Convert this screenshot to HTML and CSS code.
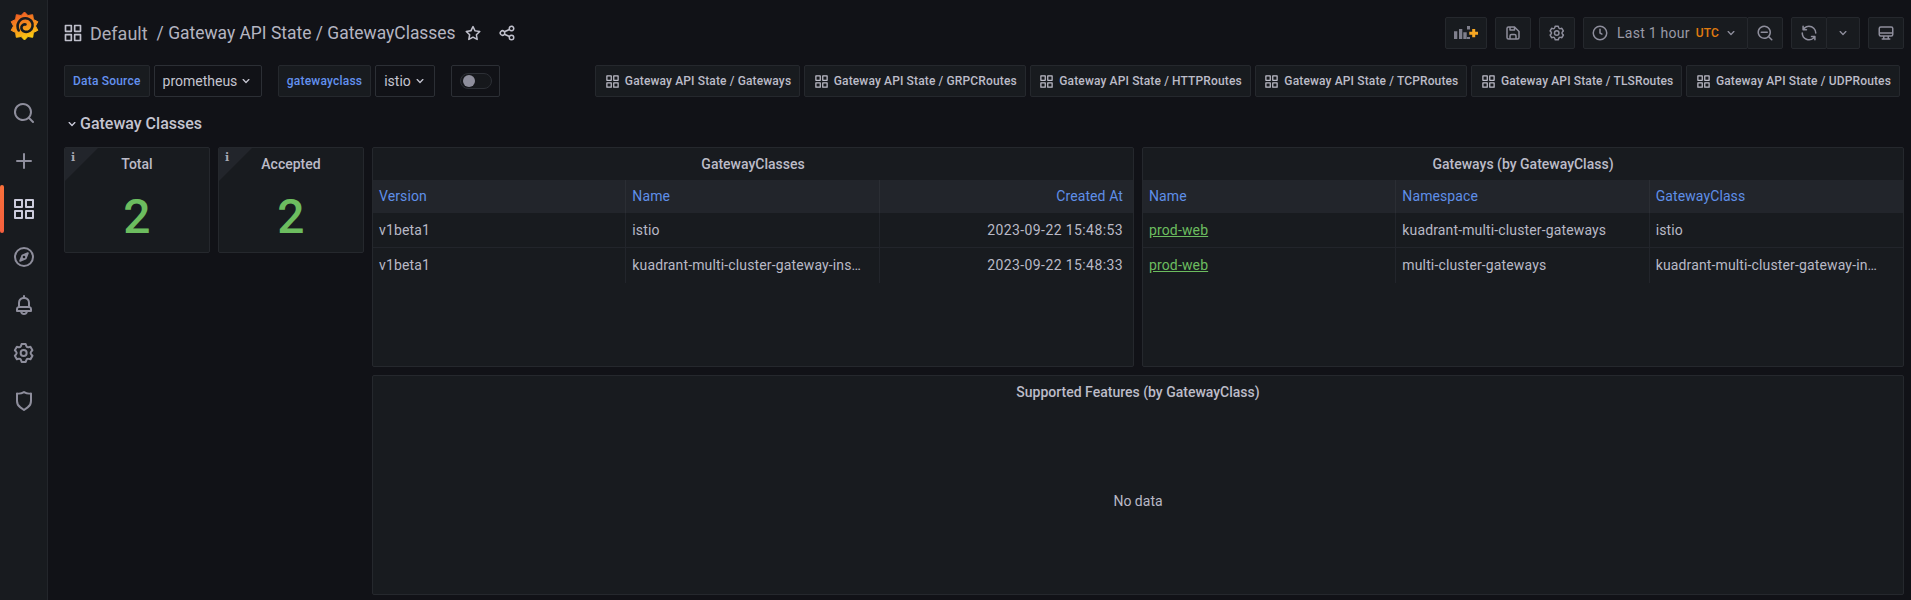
FILE: index.html
```html
<!DOCTYPE html>
<html lang="en">
<head>
<meta charset="utf-8">
<title>Gateway API State / GatewayClasses</title>
<link rel="stylesheet" href="styles.css">
</head>
<body>
<svg class="defs" width="0" height="0" aria-hidden="true">
  <defs>
    <linearGradient id="logoGrad" x1="0.3" y1="0" x2="0.6" y2="1">
      <stop offset="0" stop-color="#ee5a24"/>
      <stop offset="0.55" stop-color="#f7941d"/>
      <stop offset="1" stop-color="#fcd40f"/>
    </linearGradient>
    <symbol id="i-apps" viewBox="0 0 24 24"><path d="M10,13H3a1,1,0,0,0-1,1v7a1,1,0,0,0,1,1h7a1,1,0,0,0,1-1V14A1,1,0,0,0,10,13ZM9,20H4V15H9ZM21,2H14a1,1,0,0,0-1,1v7a1,1,0,0,0,1,1h7a1,1,0,0,0,1-1V3A1,1,0,0,0,21,2ZM20,9H15V4h5Zm1,4H14a1,1,0,0,0-1,1v7a1,1,0,0,0,1,1h7a1,1,0,0,0,1-1V14A1,1,0,0,0,21,13Zm-1,7H15V15h5ZM10,2H3A1,1,0,0,0,2,3v7a1,1,0,0,0,1,1h7a1,1,0,0,0,1-1V3A1,1,0,0,0,10,2ZM9,9H4V4H9Z"/></symbol>
    <symbol id="i-gear" viewBox="0 0 24 24"><path d="M19.9,12.66a1,1,0,0,1,0-1.32L21.18,9.9a1,1,0,0,0,.12-1.17l-2-3.46a1,1,0,0,0-1.07-.48l-1.88.38a1,1,0,0,1-1.15-.66l-.61-1.83A1,1,0,0,0,13.64,2h-4a1,1,0,0,0-1,.68L8.08,4.51a1,1,0,0,1-1.15.66L5,4.79A1,1,0,0,0,4,5.27L2,8.73A1,1,0,0,0,2.1,9.9l1.27,1.44a1,1,0,0,1,0,1.32L2.1,14.1A1,1,0,0,0,2,15.27l2,3.46a1,1,0,0,0,1.07.48l1.88-.38a1,1,0,0,1,1.15.66l.61,1.83a1,1,0,0,0,1,.68h4a1,1,0,0,0,.95-.68l.61-1.83a1,1,0,0,1,1.15-.66l1.88.38a1,1,0,0,0,1.07-.48l2-3.46a1,1,0,0,0-.12-1.17ZM18.41,14l.8.9-1.28,2.22-1.18-.24a3,3,0,0,0-3.45,2L12.92,20H10.36L10,18.86a3,3,0,0,0-3.45-2l-1.18.24L4.07,14.89l.8-.9a3,3,0,0,0,0-4l-.8-.9L5.35,6.89l1.18.24a3,3,0,0,0,3.45-2L10.36,4h2.56l.38,1.14a3,3,0,0,0,3.45,2l1.18-.24,1.28,2.22-.8.9A3,3,0,0,0,18.41,14ZM11.64,8a4,4,0,1,0,4,4A4,4,0,0,0,11.64,8Zm0,6a2,2,0,1,1,2-2A2,2,0,0,1,11.64,14Z"/></symbol>
    <symbol id="i-chev" viewBox="0 0 24 24"><path d="M17,9.17a1,1,0,0,0-1.41,0L12,12.71,8.46,9.17a1,1,0,0,0-1.41,0,1,1,0,0,0,0,1.42l4.24,4.24a1,1,0,0,0,1.42,0L17,10.59A1,1,0,0,0,17,9.17Z"/></symbol>
  </defs>
</svg>

<aside class="sidebar">
  <a class="logo" href="#" aria-label="Home">
    <svg class="logo-svg" viewBox="0 0 48 48">
      <path class="logo-gear" d="M24.500 12L27.900 15.500 32.700 14.700 33.400 19.500 37.800 21.700 35.500 26 37.800 30.300 33.400 32.500 32.700 37.300 27.900 36.500 24.500 40 21.100 36.500 16.300 37.300 15.600 32.500 11.200 30.300 13.500 26 11.200 21.700 15.600 19.500 16.300 14.700 21.100 15.500Z"/>
      <path class="logo-spiral" d="M18.700 30.500C15.500 24 20 18 25.500 18.200C30.500 18.400 33.300 22.500 32.500 26.500C31.800 30 28.500 32.500 25 31.800C22.500 31.300 21 29 21.500 26.800C22 25 23.800 24 25.500 24.500"/>
    </svg>
  </a>
  <nav class="side-nav">
    <a class="side-item" href="#"><svg class="side-icon" viewBox="0 0 24 24"><path d="M21.71,20.29,18,16.61A9,9,0,1,0,16.61,18l3.68,3.68a1,1,0,0,0,1.42,0A1,1,0,0,0,21.71,20.29ZM11,18a7,7,0,1,1,7-7A7,7,0,0,1,11,18Z"/></svg></a>
    <a class="side-item" href="#"><svg class="side-icon" viewBox="0 0 24 24"><path d="M19,11H13V5a1,1,0,0,0-2,0v6H5a1,1,0,0,0,0,2h6v6a1,1,0,0,0,2,0V13h6a1,1,0,0,0,0-2Z"/></svg></a>
    <a class="side-item active" href="#"><svg class="side-icon bright"><use href="#i-apps"/></svg></a>
    <a class="side-item" href="#"><svg class="side-icon" viewBox="0 0 24 24"><path d="M12,2A10,10,0,1,0,22,12,10,10,0,0,0,12,2Zm0,18a8,8,0,1,1,8-8A8,8,0,0,1,12,20ZM15.500,7.300,10.300,9.400a1.500,1.500,0,0,0-.9.900L7.300,15.500a.9.900,0,0,0,1.200,1.200l5.200-2.100a1.500,1.500,0,0,0,.9-.9l2.100-5.200A.9.900,0,0,0,15.500,7.300ZM12,13.300A1.300,1.300,0,1,1,13.300,12,1.300,1.300,0,0,1,12,13.300Z"/></svg></a>
    <a class="side-item" href="#"><svg class="side-icon" viewBox="0 0 24 24"><path d="M18,13.180V10a6,6,0,0,0-5-5.910V3a1,1,0,0,0-2,0V4.090A6,6,0,0,0,6,10v3.180A3,3,0,0,0,4,16v2a1,1,0,0,0,1,1H8.140a4,4,0,0,0,7.720,0H19a1,1,0,0,0,1-1V16A3,3,0,0,0,18,13.180ZM8,10a4,4,0,0,1,8,0v3H8Zm4,10a2,2,0,0,1-1.720-1h3.440A2,2,0,0,1,12,20Zm6-3H6V16a1,1,0,0,1,1-1H17a1,1,0,0,1,1,1Z"/></svg></a>
    <a class="side-item" href="#"><svg class="side-icon"><use href="#i-gear"/></svg></a>
    <a class="side-item" href="#"><svg class="side-icon" viewBox="0 0 24 24"><path d="M19.630,3.650a1,1,0,0,0-.840-.200,8,8,0,0,1-6.220-1.270,1,1,0,0,0-1.140,0A8,8,0,0,1,5.210,3.450a1,1,0,0,0-.840.200A1,1,0,0,0,4,4.430v7.450a9,9,0,0,0,3.770,7.330l3.650,2.600a1,1,0,0,0,1.160,0l3.650-2.600A9,9,0,0,0,20,11.880V4.430A1,1,0,0,0,19.630,3.650ZM18,11.880a7,7,0,0,1-2.930,5.700L12,19.770,8.930,17.580A7,7,0,0,1,6,11.880V5.570a10,10,0,0,0,6-1.390,10,10,0,0,0,6,1.390Z"/></svg></a>
  </nav>
</aside>

<main class="main">
  <header class="toolbar">
    <div class="crumbs">
      <svg class="crumb-icon"><use href="#i-apps"/></svg>
      <span class="crumb-folder">Default</span>
      <span class="crumb-title">/ Gateway API State / GatewayClasses</span>
      <svg class="star-icon" viewBox="0 0 24 24"><path d="M22,9.670A1,1,0,0,0,21.140,9l-5.690-.83L12.900,3a1,1,0,0,0-1.800,0L8.550,8.160,2.860,9a1,1,0,0,0-.81.680,1,1,0,0,0,.25,1l4.130,4-1,5.680A1,1,0,0,0,6.900,21.440L12,18.770l5.100,2.670a.93.93,0,0,0,.46.12,1,1,0,0,0,.59-.19,1,1,0,0,0,.4-1l-1-5.680,4.130-4A1,1,0,0,0,22,9.670Zm-6.150,4a1,1,0,0,0-.29.88l.72,4.200-3.760-2a1.060,1.060,0,0,0-.94,0l-3.760,2,.72-4.200a1,1,0,0,0-.29-.88l-3-3,4.210-.61a1,1,0,0,0,.76-.55L12,5.700l1.880,3.820a1,1,0,0,0,.76.55l4.210.61Z"/></svg>
      <svg class="share-icon" viewBox="0 0 24 24"><path d="M18,14a4,4,0,0,0-3.080,1.480l-5.100-2.350a3.640,3.640,0,0,0,0-2.260l5.100-2.350A4,4,0,1,0,14,6a4.170,4.170,0,0,0,.07.71L8.790,9.140a4,4,0,1,0,0,5.720l5.280,2.430A4.170,4.170,0,0,0,14,18a4,4,0,1,0,4-4ZM18,4a2,2,0,1,1-2,2A2,2,0,0,1,18,4ZM6,14a2,2,0,1,1,2-2A2,2,0,0,1,6,14Zm12,6a2,2,0,1,1,2-2A2,2,0,0,1,18,20Z"/></svg>
    </div>
    <div class="actions">
      <button class="tb-btn add-btn" aria-label="Add panel">
        <svg class="add-icon" viewBox="0 0 24 14">
          <path class="bars" d="M0 5.300h3.300V13H0zM5 3h3.300v10H5zM9.300 6.300h3.400V13H9.300zM13 0h3v3.500h-3zM13 11h3v2h-3z"/>
          <path class="plus" d="M18.200 3h3v2.800H24v3h-2.800v2.500h-3V8.800h-2.900v-3h2.900z"/>
        </svg>
      </button>
      <button class="tb-btn" aria-label="Save"><svg class="tb-icon" viewBox="0 0 24 24"><path d="M20.710,9.290l-6-6A1,1,0,0,0,14,3H6A3,3,0,0,0,3,6V18a3,3,0,0,0,3,3H18a3,3,0,0,0,3-3V10A1,1,0,0,0,20.710,9.290ZM9,5h4V7H9Zm6,14H9V16a1,1,0,0,1,1-1h4a1,1,0,0,1,1,1Zm4-1a1,1,0,0,1-1,1H17V16a3,3,0,0,0-3-3H10a3,3,0,0,0-3,3v3H6a1,1,0,0,1-1-1V6A1,1,0,0,1,6,5H7V8A1,1,0,0,0,8,9h6a1,1,0,0,0,1-1V6.410l4,4Z"/></svg></button>
      <button class="tb-btn" aria-label="Settings"><svg class="tb-icon"><use href="#i-gear"/></svg></button>
      <div class="btn-group">
        <button class="tb-btn time-btn">
          <svg class="tb-icon" viewBox="0 0 24 24"><path d="M12,2A10,10,0,1,0,22,12,10,10,0,0,0,12,2Zm0,18a8,8,0,1,1,8-8A8,8,0,0,1,12,20Zm3.100-7.370L13,11.420V7a1,1,0,0,0-2,0v5s0,.08,0,.12a.65.65,0,0,0,0,.18.71.71,0,0,0,.08.170.59.590,0,0,0,.1.160l.16.130.09.090,2.600,1.500a1,1,0,0,0,.5.130,1,1,0,0,0,.5-1.870Z"/></svg>
          <span class="time-label">Last 1 hour</span>
          <span class="time-utc">UTC</span>
          <svg class="chev-sm"><use href="#i-chev"/></svg>
        </button>
        <button class="tb-btn" aria-label="Zoom out"><svg class="tb-icon" viewBox="0 0 24 24"><path d="M21.710,20.290,18,16.610A9,9,0,1,0,16.610,18l3.680,3.680a1,1,0,0,0,1.420,0A1,1,0,0,0,21.710,20.290ZM11,18a7,7,0,1,1,7-7A7,7,0,0,1,11,18ZM15,10H7a1,1,0,0,0,0,2h8a1,1,0,0,0,0-2Z"/></svg></button>
      </div>
      <div class="btn-group">
        <button class="tb-btn" aria-label="Refresh"><svg class="tb-icon" viewBox="0 0 24 24"><path d="M19.910,15.510H15.380a1,1,0,0,0,0,2h2.400A8,8,0,0,1,4,12a1,1,0,0,0-2,0,10,10,0,0,0,16.880,7.250V21a1,1,0,0,0,2,0V16.500A1,1,0,0,0,19.910,15.510ZM12,2A10,10,0,0,0,5.120,4.750V3a1,1,0,0,0-2,0V7.500a1,1,0,0,0,1,1h4.500a1,1,0,0,0,0-2H6.220A8,8,0,0,1,20,12a1,1,0,0,0,2,0A10,10,0,0,0,12,2Z"/></svg></button>
        <button class="tb-btn narrow" aria-label="Interval"><svg class="chev-sm"><use href="#i-chev"/></svg></button>
      </div>
      <button class="tb-btn" aria-label="Cycle view"><svg class="tb-icon" viewBox="0 0 24 24"><path d="M19,3H5A3,3,0,0,0,2,6v8a3,3,0,0,0,3,3H8v2H7a1,1,0,0,0,0,2H17a1,1,0,0,0,0-2H16V17h3a3,3,0,0,0,3-3V6A3,3,0,0,0,19,3ZM14,19H10V17h4Zm6-5a1,1,0,0,1-1,1H5a1,1,0,0,1-1-1V13H20Zm0-3H4V6A1,1,0,0,1,5,5H19a1,1,0,0,1,1,1Z"/></svg></button>
    </div>
  </header>

  <section class="controls">
    <div class="vars">
      <div class="var">
        <label class="var-label">Data Source</label>
        <div class="var-select">prometheus<svg class="chev-sm"><use href="#i-chev"/></svg></div>
      </div>
      <div class="var">
        <label class="var-label">gatewayclass</label>
        <div class="var-select">istio<svg class="chev-sm"><use href="#i-chev"/></svg></div>
      </div>
      <div class="var-toggle"><span class="switch"><span class="knob"></span></span></div>
    </div>
    <div class="links">
      <a class="dash-link" href="#"><svg class="link-icon"><use href="#i-apps"/></svg>Gateway API State / Gateways</a>
      <a class="dash-link" href="#"><svg class="link-icon"><use href="#i-apps"/></svg>Gateway API State / GRPCRoutes</a>
      <a class="dash-link" href="#"><svg class="link-icon"><use href="#i-apps"/></svg>Gateway API State / HTTPRoutes</a>
      <a class="dash-link" href="#"><svg class="link-icon"><use href="#i-apps"/></svg>Gateway API State / TCPRoutes</a>
      <a class="dash-link" href="#"><svg class="link-icon"><use href="#i-apps"/></svg>Gateway API State / TLSRoutes</a>
      <a class="dash-link" href="#"><svg class="link-icon"><use href="#i-apps"/></svg>Gateway API State / UDPRoutes</a>
    </div>
  </section>

  <div class="row-title"><svg class="row-chev"><use href="#i-chev"/></svg>Gateway Classes</div>

  <div class="dash-grid">
    <article class="panel stat">
      <span class="corner"><span class="corner-i">i</span></span>
      <h2 class="panel-title">Total</h2>
      <div class="stat-value">2</div>
    </article>
    <article class="panel stat">
      <span class="corner"><span class="corner-i">i</span></span>
      <h2 class="panel-title">Accepted</h2>
      <div class="stat-value">2</div>
    </article>
    <article class="panel tall">
      <h2 class="panel-title">GatewayClasses</h2>
      <div class="table">
        <div class="tr head"><div class="td">Version</div><div class="td">Name</div><div class="td right">Created At</div></div>
        <div class="tr"><div class="td">v1beta1</div><div class="td">istio</div><div class="td right date">2023-09-22 15:48:53</div></div>
        <div class="tr"><div class="td">v1beta1</div><div class="td">kuadrant-multi-cluster-gateway-ins…</div><div class="td right date">2023-09-22 15:48:33</div></div>
      </div>
    </article>
    <article class="panel tall">
      <h2 class="panel-title">Gateways (by GatewayClass)</h2>
      <div class="table">
        <div class="tr head"><div class="td">Name</div><div class="td">Namespace</div><div class="td">GatewayClass</div></div>
        <div class="tr"><div class="td"><a class="cell-link" href="#">prod-web</a></div><div class="td">kuadrant-multi-cluster-gateways</div><div class="td">istio</div></div>
        <div class="tr"><div class="td"><a class="cell-link" href="#">prod-web</a></div><div class="td">multi-cluster-gateways</div><div class="td">kuadrant-multi-cluster-gateway-in…</div></div>
      </div>
    </article>
    <article class="panel wide">
      <h2 class="panel-title">Supported Features (by GatewayClass)</h2>
      <div class="no-data">No data</div>
    </article>
  </div>
</main>
</body>
</html>
```
FILE: styles.css
```css
* { box-sizing: border-box; }
html, body { height: 100%; }
body {
  margin: 0;
  display: flex;
  height: 600px;
  overflow: hidden;
  background: #111217;
  color: #ccccdc;
  font-family: Roboto, "Liberation Sans", sans-serif;
  font-size: 14px;
  line-height: 1.5;
}
a { color: inherit; text-decoration: none; }
button { font: inherit; color: inherit; }
svg { fill: currentColor; flex: none; display: block; }
.defs { position: absolute; }

/* sidebar */
.sidebar {
  width: 48px;
  flex: none;
  background: #181b1f;
  border-right: 1px solid #23262b;
  color: #8e8e9c;
  display: flex;
  flex-direction: column;
}
.logo { height: 48px; margin-bottom: 41px; display: block; }
.logo-svg { width: 48px; height: 48px; }
.logo-gear { fill: url(#logoGrad); stroke: url(#logoGrad); stroke-width: 1; stroke-linejoin: round; }
.logo-spiral { fill: none; stroke: #181b1f; stroke-width: 2.600; stroke-linecap: round; }
.side-nav { display: flex; flex-direction: column; }
.side-item { height: 48px; display: flex; align-items: center; justify-content: center; position: relative; }
.side-item.active::before {
  content: "";
  position: absolute;
  left: 0; top: 0; bottom: 0;
  width: 4px;
  border-radius: 2px;
  background: linear-gradient(#f9703a, #f55f3e);
}
.side-icon { width: 24px; height: 24px; }
.side-icon.bright { color: #ccccdc; }

/* main */
.main { flex: 1; min-width: 0; padding: 17px 7px 0 16px; }
.toolbar { display: flex; justify-content: space-between; align-items: center; height: 32px; }
.crumbs { display: flex; align-items: center; color: #c0c0cc; }
.crumb-icon { width: 20px; height: 20px; margin-left: -1px; margin-right: 7px; color: #c0c0cc; }
.crumb-folder { font-size: 18px; margin-right: 9px; color: #aeaeb9; }
.crumb-title { font-size: 17.450px; color: #b5b5c2; }
.star-icon { width: 18px; height: 18px; margin-left: 8px; }
.share-icon { width: 18px; height: 18px; margin-left: 16px; }
.actions { display: flex; gap: 8px; }
.tb-btn {
  height: 32px;
  width: 36px;
  padding: 0;
  background: #181b1f;
  border: 1px solid #25282d;
  border-radius: 2px;
  display: flex;
  align-items: center;
  justify-content: center;
  color: #8e8e9c;
}
.add-btn { width: 42px; }
.add-icon { width: 24px; height: 14px; }
.bars { fill: #7f7f8c; }
.plus { fill: #f5a623; }
.tb-icon { width: 18px; height: 18px; }
.btn-group { display: flex; }
.btn-group .tb-btn + .tb-btn { margin-left: -1px; }
.time-btn { width: 165px; padding: 0 8px 0 7px; justify-content: flex-start; white-space: nowrap; }
.time-label { margin-left: 8px; letter-spacing: .25px; color: #9a9aa7; }
.time-utc { margin-left: 6px; font-size: 12px; font-weight: 500; letter-spacing: .14px; color: #e07b0f; }
.chev-sm { width: 16px; height: 16px; margin-left: 4px; }
.var-select .chev-sm { margin-left: 1px; }
.narrow { width: 34px; }
.narrow .chev-sm { margin-left: 0; }

/* controls */
.controls { display: flex; justify-content: space-between; margin-top: 16px; padding-right: 4px; }
.vars { display: flex; gap: 16px; }
.var { display: flex; gap: 4px; }
.var-label {
  height: 32px;
  padding: 0 8px;
  display: flex;
  align-items: center;
  background: #181b1f;
  border: 1px solid #25282d;
  border-radius: 2px;
  color: #6391ef;
  font-size: 12px;
  font-weight: 500;
  letter-spacing: .2px;
}
.var-select {
  height: 32px;
  padding: 0 6.500px 0 8px;
  display: flex;
  align-items: center;
  background: #111217;
  border: 1px solid #2c2f35;
  border-radius: 2px;
  color: #c4c4d0;
}
.var-toggle {
  width: 49px;
  height: 32px;
  border: 1px solid #2c2f35;
  border-radius: 2px;
  display: flex;
  align-items: center;
  justify-content: center;
}
.switch { width: 32px; height: 16px; border: 1px solid #2c2f35; border-radius: 50px; background: #16181c; display: block; position: relative; }
.knob { position: absolute; left: 2px; top: 1px; width: 12px; height: 12px; border-radius: 50%; background: #8e8e9c; }
.links { display: flex; gap: 4px; }
.dash-link {
  height: 32px;
  padding: 0 8px 0 8.500px;
  display: flex;
  align-items: center;
  gap: 5px;
  background: #181b1f;
  border: 1px solid #25282d;
  border-radius: 2px;
  font-size: 12px;
  font-weight: 500;
  letter-spacing: .14px;
  color: #bcbcc8;
  white-space: nowrap;
}
.link-icon { width: 15px; height: 15px; }

/* row title */
.row-title {
  height: 24px;
  margin-top: 15px;
  display: flex;
  align-items: center;
  font-size: 16px;
  font-weight: 500;
  color: #c4c4d0;
}
.row-chev { width: 16px; height: 16px; color: #ccccdc; }

/* panels */
.dash-grid {
  margin-top: 11px;
  display: grid;
  grid-template-columns: 146px 146px 762px 762px;
  grid-template-rows: 220px 220px;
  gap: 8px;
}
.panel {
  background: #181b1f;
  border: 1px solid #25282d;
  border-radius: 2px;
  position: relative;
  min-width: 0;
  overflow: hidden;
}
.stat { height: 106px; text-align: center; }
.wide { grid-column: 3 / 5; display: flex; flex-direction: column; }
.panel-title {
  margin: 0;
  height: 32px;
  display: flex;
  align-items: center;
  justify-content: center;
  font-size: 14px;
  font-weight: 500;
  color: #bcbcc8;
}
.corner {
  position: absolute;
  left: 0; top: 0;
  width: 33px; height: 33px;
  background: #22252b;
  clip-path: polygon(0 0, 100% 0, 0 100%);
}
.corner-i {
  position: absolute;
  left: 6px; top: 0;
  font: 700 11px/20px "DejaVu Serif", serif;
  color: #a8a8b4;
}
.stat-value { font-size: 48px; line-height: 56px; margin-top: 9px; font-weight: 500; color: #6cbd5f; }
.table { display: flex; flex-direction: column; }
.tr { display: grid; grid-template-columns: repeat(3, 1fr); height: 35px; border-bottom: 1px solid #22252b; }
.tr:last-child { border-bottom: 0; }
.tr.head { height: 33px; background: #22252b; border-bottom: 0; }
.td {
  padding: 0 6px;
  line-height: 34px;
  white-space: nowrap;
  letter-spacing: .14px;
  border-right: 1px solid #22252b;
  color: #b9b9c6;
}
.head .td { line-height: 33px; color: #5f8fe8; border-right-color: #2b2e34; letter-spacing: .1px; }
.td:last-child { border-right: 0; }
.td.right { text-align: right; padding-right: 10px; }
.td.date { letter-spacing: .4px; }
.cell-link { color: #6cbd5f; text-decoration: underline; }
.no-data { flex: 1; display: flex; align-items: center; justify-content: center; color: #b9b9c6; }
```
